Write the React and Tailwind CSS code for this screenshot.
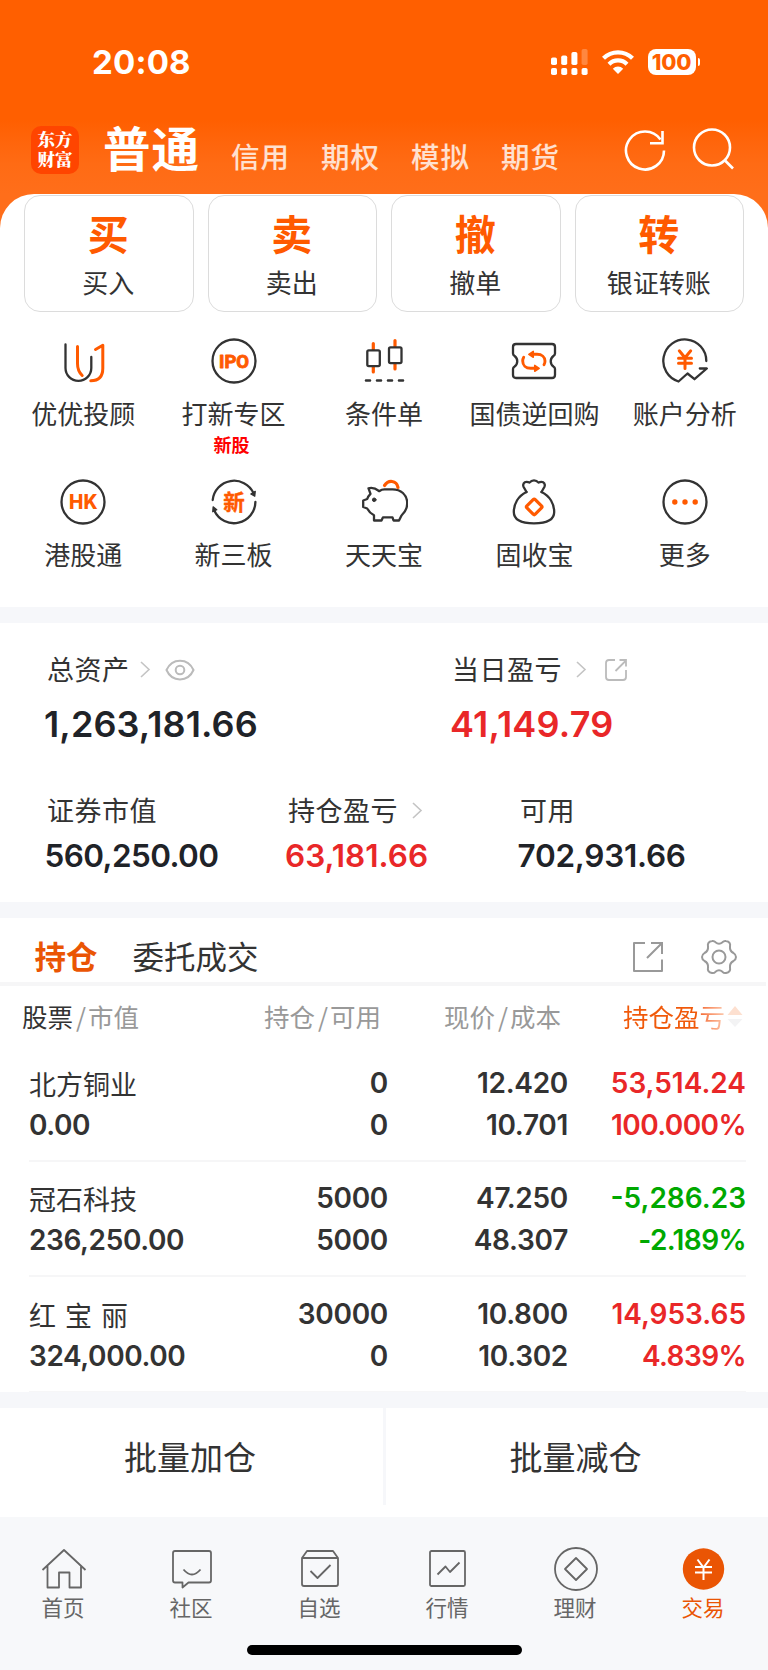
import React from 'react';

const TRADE_TABS = ['信用', '期权', '模拟', '期货'];

const ACTIONS = [
  { mark: '买', label: '买入' },
  { mark: '卖', label: '卖出' },
  { mark: '撤', label: '撤单' },
  { mark: '转', label: '银证转账' },
];

const HOLDINGS = [
  { name: '北方铜业', value: '0.00', held: '0', usable: '0', price: '12.420', cost: '10.701', profit: '53,514.24', rate: '100.000%', up: true },
  { name: '冠石科技', value: '236,250.00', held: '5000', usable: '5000', price: '47.250', cost: '48.307', profit: '-5,286.23', rate: '-2.189%', up: false },
  { name: '红 宝 丽', value: '324,000.00', held: '30000', usable: '0', price: '10.800', cost: '10.302', profit: '14,953.65', rate: '4.839%', up: true },
];

// ── Shortcut icons (48 x 48, dark outline with orange accent) ─────────
function ShortcutIcon({ children }) {
  return (
    <svg className="w-12 h-12" viewBox="0 0 48 48" fill="none" stroke="#333" strokeWidth="2.3" strokeLinecap="round" strokeLinejoin="round">
      {children}
    </svg>
  );
}

const AdvisorIcon = () => (
  <ShortcutIcon>
    <path d="M6.5 7.5v23.500a12.900 12.900 0 0 0 25.800 0V20" />
    <path d="M18.500 9.500v17c0 5 1 8.500 4.700 12" stroke="#ff5a00" strokeWidth="3" />
    <path d="M36.500 12.500l7.300-4.300v23c0 8-4 12.500-12 12.500" stroke="#ff5a00" strokeWidth="3" />
  </ShortcutIcon>
);

const IpoIcon = () => (
  <ShortcutIcon>
    <circle cx="24" cy="24" r="21.5" />
    <text x="24" y="30.800" textAnchor="middle" textLength="30" lengthAdjust="spacingAndGlyphs" fontFamily="Roboto, sans-serif" fontSize="18.500" fontWeight="700" fill="#ff5a00" stroke="#ff5a00" strokeWidth="0.900">IPO</text>
  </ShortcutIcon>
);

const ConditionIcon = () => (
  <ShortcutIcon>
    <path d="M13.300 6.500v6M13.300 30v5M35 3.500v6M35 27v5" stroke="#ff5a00" strokeWidth="3.200" />
    <rect x="7.300" y="13.300" width="12.500" height="15.800" rx="1.500" />
    <rect x="29" y="10.300" width="12.500" height="15.800" rx="1.500" />
    <path d="M6 43.500h4M17 43.500h4M28 43.500h4M39 43.500h4" strokeWidth="2.600" />
  </ShortcutIcon>
);

const BondIcon = () => (
  <ShortcutIcon>
    <path d="M6 7h36q3 0 3 3v6.500q0 1.500-1.600 2.500a6.500 6.500 0 0 0 0 10.500q1.600 1 1.600 2.500V38q0 3-3 3H6q-3 0-3-3v-6q0-1.500 1.600-2.500a6.500 6.500 0 0 0 0-10.500Q3 18 3 16.500V10q0-3 3-3z" />
    <path d="M23 17.300h4c5 0 8 3 8 6.700 0 1.500-.4 2.800-1 3.800M13.700 20.300c-.6 1-1 2.200-1 3.700 0 4 3 7.300 8 7.300h4" stroke="#ff5a00" strokeWidth="2.900" />
    <path d="M23.300 14.300v6l-4.500-3zM24.700 28.300v6l4.500-3z" fill="#ff5a00" stroke="#ff5a00" strokeWidth="1.500" />
  </ShortcutIcon>
);

const AccountIcon = () => (
  <ShortcutIcon>
    <path d="M45.300 24A21.500 21.500 0 1 0 17.500 44.500l9-8 7 5.700L45.800 31.500h-7" />
    <path d="M18.300 13.800l5.700 7 5.700-7M24 21v10.500M17.500 21.300h13M17.500 26.300h13" stroke="#ff5a00" strokeWidth="3" />
  </ShortcutIcon>
);

const HkIcon = () => (
  <ShortcutIcon>
    <circle cx="24" cy="24" r="21.5" />
    <text x="24.300" y="31" textAnchor="middle" textLength="28.500" lengthAdjust="spacingAndGlyphs" fontFamily="Inter, sans-serif" fontSize="20" fontWeight="800" fill="#ff5a00" stroke="none">HK</text>
  </ShortcutIcon>
);

const NewBoardIcon = () => (
  <ShortcutIcon>
    <path d="M2.700 22A21.500 21.500 0 0 1 43.500 15M45.400 24A21.500 21.500 0 0 1 4.500 33" />
    <path d="M40.800 16l4 2.300.5-5zM2.700 33.800l.4-5 3.700 3z" fill="#333" strokeWidth="1.200" />
    <text x="24" y="31.500" textAnchor="middle" fontFamily="'Noto Sans CJK SC', sans-serif" fontSize="21.500" fontWeight="700" fill="#ff5a00" stroke="#ff5a00" strokeWidth="0.400">新</text>
  </ShortcutIcon>
);

const PiggyIcon = () => (
  <ShortcutIcon>
    <path d="M19 13Q13.500 8.800 8.500 10.300l2 5.500q-2.600 2.500-3.300 5.200l-4 1.500v6.500l4 1.500q2.300 4.500 6.800 6.800V42.500h7.500l1.500-3.200h9.500l1 3.200h5.500l2.500-5q5.700-5.300 5.700-12c0-9-6.500-14.200-14.700-14.200h-8q-2.800 0-5 1.700z" />
    <circle cx="14.200" cy="21.800" r="1.800" fill="#333" stroke="#333" strokeWidth="1" />
    <path d="M24.500 7.500q3-4.500 7.500-4 5 .5 6 6" stroke="#ff5a00" strokeWidth="3.200" />
  </ShortcutIcon>
);

const PouchIcon = () => (
  <ShortcutIcon>
    <path d="M16.500 14l-3-5.200c-1-2.500.5-5 3-5q1.800 0 3 .8 1.800-2.300 4.500-2.300t4.500 2.300q1.200-.8 3-.8c2.500 0 4 2.500 3 5L31.500 14" />
    <path d="M16.500 14C8 18 3.800 26 3.800 34c0 8.500 8.700 11.300 20.200 11.300S44.200 42.500 44.200 34c0-8-4.200-16-12.700-20" />
    <rect x="18.300" y="23" width="11.800" height="11.800" rx="1.500" transform="rotate(45 24.200 28.900)" stroke="#ff5a00" strokeWidth="3.200" />
  </ShortcutIcon>
);

const MoreIcon = () => (
  <ShortcutIcon>
    <circle cx="24" cy="24" r="21.5" />
    <g fill="#ff5a00" stroke="none">
      <circle cx="13.800" cy="24" r="2.700" />
      <circle cx="24" cy="24" r="2.700" />
      <circle cx="34.200" cy="24" r="2.700" />
    </g>
  </ShortcutIcon>
);

const SHORTCUTS = [
  { label: '优优投顾', Icon: AdvisorIcon },
  { label: '打新专区', Icon: IpoIcon, tag: '新股' },
  { label: '条件单', Icon: ConditionIcon },
  { label: '国债逆回购', Icon: BondIcon },
  { label: '账户分析', Icon: AccountIcon },
  { label: '港股通', Icon: HkIcon },
  { label: '新三板', Icon: NewBoardIcon },
  { label: '天天宝', Icon: PiggyIcon },
  { label: '固收宝', Icon: PouchIcon },
  { label: '更多', Icon: MoreIcon },
];

// ── Bottom navigation ────────────────────────────────────────────────
const NAV = [
  { label: '首页', art: <path d="M2.500 24L24 4l21.500 20M7.500 20v21.500h11.500V26.500h10.500v15h11.500V20" /> },
  { label: '社区', art: <><path d="M7 5h34q2 0 2 2v27.500q0 2-2 2H20.500l-6 5v-5H7q-2 0-2-2V7q0-2 2-2z" /><path d="M15.500 23.500q8.500 10 17 0" /></> },
  { label: '自选', art: <><path d="M6 12v26q0 2 2 2h32q2 0 2-2V12l-5-7H11zM6 12h36" /><path d="M14.500 25l7 7L34.500 19" /></> },
  { label: '行情', art: <><rect x="6" y="5" width="35" height="35" rx="1.500" /><path d="M13.500 28.500l8-8 4.500 5.500 9.500-9.500" /></> },
  { label: '理财', art: <><circle cx="24" cy="23" r="21" /><path d="M24 12l11 11-11 11-11-11z" /></> },
  { label: '交易', active: true },
];

function Chevron() {
  return (
    <svg className="w-[11px] h-[17px]" viewBox="0 0 11 17" fill="none" stroke="#c4c4c4" strokeWidth="1.600">
      <path d="M1 1l8 7.500L1 16" />
    </svg>
  );
}

function StatusBar() {
  return (
    <div className="h-[120px] pt-[42px] pl-[92px] pr-[68px] flex justify-between items-start">
      <span className="-mt-px font-[Inter,sans-serif] font-bold text-[33px] leading-[42px] tracking-[0.200px]">20:08</span>
      <div className="flex items-center h-[40px]">
        <svg className="w-[38px] h-[27px]" viewBox="0 0 38 27" fill="#fff">
          <rect x="0" y="8.500" width="6" height="7.500" rx="1.800" />
          <rect x="10.200" y="6.500" width="6" height="9.500" rx="1.800" />
          <rect x="20.400" y="3" width="6" height="13" rx="1.800" />
          <rect x="30.600" y="0" width="6" height="16" rx="1.800" opacity="0.250" />
          <rect x="0" y="19" width="6" height="7" rx="1.800" />
          <rect x="10.200" y="19" width="6" height="7" rx="1.800" />
          <rect x="20.400" y="19" width="6" height="7" rx="1.800" />
          <rect x="30.600" y="19" width="6" height="7" rx="1.800" />
        </svg>
        <svg className="w-[32px] h-[24px] ml-[13px]" viewBox="0 0 32 24" fill="none" stroke="#fff" strokeWidth="4.200">
          <path d="M1.500 8.300a20.500 20.500 0 0 1 29 0" />
          <path d="M7 14.200a12.700 12.700 0 0 1 18 0" />
          <path d="M16 24l-5.200-5.200a7.300 7.300 0 0 1 10.400 0z" fill="#fff" stroke="none" />
        </svg>
        <div className="ml-[14px] w-[48px] h-[26px] rounded-[8px] bg-white text-[#ff5f00] font-[Inter,sans-serif] font-extrabold text-[22px] leading-[26px] text-center tracking-[-0.300px]">100</div>
        <div className="ml-[2px] w-[2.500px] h-[8px] rounded-r-full bg-white" />
      </div>
    </div>
  );
}

function TopNav() {
  return (
    <div className="h-[74px] pl-[31px] pr-[34px] flex items-start bg-linear-to-b from-[#ff5f00] from-0% via-[#ff6b14] via-60% to-[#ff6e1a]">
      <div className="mt-[6px] w-[48px] h-[48px] shrink-0 rounded-[10px] bg-[#ff4500] pt-[3px] text-center font-['Noto_Serif_CJK_SC','Noto_Sans_CJK_SC',serif] font-black text-[17.500px] leading-[20px]">
        东方<br />财富
      </div>
      <span className="ml-[24px] w-[106px] shrink-0 font-bold text-[47.500px] leading-[54px] tracking-[1px] whitespace-nowrap">普通</span>
      <div className="ml-[22px] mt-[17px] flex w-[360px] shrink-0 text-[28.500px] leading-[38px] tracking-[1px] text-white/80 font-medium">
        {TRADE_TABS.map((tab) => (
          <span key={tab} className="w-[90px]">{tab}</span>
        ))}
      </div>
      <svg className="w-[44px] h-[44px] mt-[8px] ml-[32px] shrink-0" viewBox="0 0 44 44" fill="none" stroke="#fff" strokeWidth="2.600">
        <path d="M41 22.500A19 19 0 1 1 37.500 11.500" />
        <path d="M39.500 3v12.300H27" />
      </svg>
      <svg className="w-[44px] h-[44px] mt-[7px] ml-[24px] shrink-0" viewBox="0 0 44 44" fill="none" stroke="#fff" strokeWidth="2.600">
        <circle cx="21" cy="20.500" r="18" />
        <path d="M33.500 33l8.500 8.500" />
      </svg>
    </div>
  );
}

function ActionCards() {
  return (
    <div className="grid grid-cols-4 gap-[14px] pl-[24px] pr-6 pt-px">
      {ACTIONS.map(({ mark, label }) => (
        <div key={label} className="h-[117px] rounded-[16px] border-[1.500px] border-[#dcdcdc] flex flex-col items-center">
          <span className="mt-[12px] mr-px text-[41px] leading-[48px] font-bold text-[#ff5a00]">{mark}</span>
          <span className="mt-[9px] mr-px text-[26px] leading-[34px]">{label}</span>
        </div>
      ))}
    </div>
  );
}

function Shortcuts() {
  return (
    <div className="grid grid-cols-5 px-2 pt-[25px] h-[295px] auto-rows-[140.500px]">
      {SHORTCUTS.map(({ label, Icon, tag }) => (
        <div key={label} className="flex flex-col items-center">
          <Icon />
          <span className="mt-[10px] text-[26px] leading-[36px] whitespace-nowrap">{label}</span>
          {tag && <span className="mt-[1px] mr-[4px] text-[18px] leading-[24px] font-bold text-[#ff0000]">{tag}</span>}
        </div>
      ))}
    </div>
  );
}

function Assets() {
  return (
    <div className="h-[279px] pt-[28px]">
      <div className="flex">
        <div className="w-[405px] pl-[47px]">
          <div className="flex items-center h-[36px]">
            <span className="text-[27px] leading-[36px] tracking-[0.500px]">总资产</span>
            <div className="ml-[10px]"><Chevron /></div>
            <svg className="ml-[14px] mt-px w-[30px] h-[22px]" viewBox="0 0 30 22" fill="none" stroke="#bbb" strokeWidth="2">
              <path d="M1.500 11C7 -1.500 23 -1.500 28.500 11C23 23.500 7 23.500 1.500 11z" />
              <circle cx="15" cy="11" r="4.300" />
            </svg>
          </div>
          <div className="-ml-[3px] mt-[17px] font-[Inter,sans-serif] font-semibold text-[36px] leading-[40px] tracking-[0.100px] text-[#1f2328]">1,263,181.66</div>
        </div>
        <div className="pl-[47px]">
          <div className="flex items-center h-[36px]">
            <span className="text-[27px] leading-[36px] tracking-[0.500px]">当日盈亏</span>
            <div className="ml-[14px]"><Chevron /></div>
            <svg className="ml-[17px] mt-[2px] w-[24px] h-[24px]" viewBox="0 0 24 24" fill="none" stroke="#bbb" strokeWidth="1.800">
              <path d="M11 2H5Q2 2 2 5v14q0 3 3 3h14q3 0 3-3v-7" />
              <path d="M11.500 13L22 2.500M15.500 2H22v6.500" />
            </svg>
          </div>
          <div className="-ml-[2px] mt-[17px] font-[Inter,sans-serif] font-semibold text-[36px] leading-[40px] tracking-[0.200px] text-[#e92728]">41,149.79</div>
        </div>
      </div>
      <div className="flex mt-[48px] text-[27px]">
        <div className="w-[241px] pl-[47px]">
          <div className="leading-[36px] tracking-[0.500px]">证券市值</div>
          <div className="-ml-[2.500px] mt-[10px] font-[Inter,sans-serif] font-semibold text-[31.500px] leading-[36px] tracking-[-0.600px] text-[#1f2328]">560,250.00</div>
        </div>
        <div className="w-[232px] pl-[47px]">
          <div className="flex items-center leading-[36px] tracking-[0.500px]">
            持仓盈亏
            <div className="ml-[14px]"><Chevron /></div>
          </div>
          <div className="-ml-[3px] mt-[10px] font-[Inter,sans-serif] font-semibold text-[31.500px] leading-[36px] text-[#e92728]">63,181.66</div>
        </div>
        <div className="pl-[47px]">
          <div className="leading-[36px] tracking-[0.500px]">可用</div>
          <div className="-ml-[2.500px] mt-[10px] font-[Inter,sans-serif] font-semibold text-[31.500px] leading-[36px] tracking-[-0.250px] text-[#1f2328]">702,931.66</div>
        </div>
      </div>
    </div>
  );
}

function HoldingRow({ row }) {
  const tone = row.up ? 'text-[#e92728]' : 'text-[#00a800]';
  return (
    <div className="ml-[29px] mr-[22px] h-[115.700px] pt-[15.500px] border-b-2 border-[#f6f6f7] grid grid-cols-[180px_179px_180px_178px] font-[Inter,sans-serif] font-semibold text-[28px] leading-[42px] tracking-[-0.300px] text-right">
      <div className="text-left">
        <div className="font-['Noto_Sans_CJK_SC',sans-serif] font-normal text-[27px] h-[42px] leading-[44px] tracking-normal [word-spacing:3px] whitespace-pre">{row.name}</div>
        <div className="tracking-[-0.400px]">{row.value}</div>
      </div>
      <div>
        <div>{row.held}</div>
        <div>{row.usable}</div>
      </div>
      <div>
        <div>{row.price}</div>
        <div>{row.cost}</div>
      </div>
      <div className={tone}>
        <div className="tracking-normal">{row.profit}</div>
        <div className="tracking-[-0.600px]">{row.rate}</div>
      </div>
    </div>
  );
}

function Holdings() {
  return (
    <div>
      <div className="h-[64px] pl-[34.500px] pr-[31px] flex items-center text-[31.500px] leading-[44px]">
        <span className="mt-[9px] font-bold text-[#ea5504]">持仓</span>
        <span className="mt-[9px] ml-[35px]">委托成交</span>
        <svg className="ml-auto mt-[13px] w-[32px] h-[32px]" viewBox="0 0 32 32" fill="none" stroke="#999" strokeWidth="2">
          <path d="M13 2H2v28h28V18.500" strokeLinejoin="round" />
          <path d="M15 17L30 2M19 2h11v11" />
        </svg>
        <svg className="ml-[37px] mt-[13px] w-[36px] h-[36px]" viewBox="0 0 36 36" fill="none" stroke="#999" strokeWidth="2">
          <path d="M7 7.500Q6 3 11 2q2-.5 3.500 1.200 3.500 3 7 0Q23 1.500 25 2q5 1 4 5.500-.5 4.500 3.500 6.500 2.500 1.500 2.500 4t-2.500 4Q28.500 24 29 28.500q1 4.500-4 5.500-2 .5-3.500-1.200-3.500-3-7 0Q13 34.500 11 34q-5-1-4-5.500Q7.500 24 3.500 22 1 20.500 1 18t2.500-4Q7.500 12 7 7.500z" />
          <circle cx="18" cy="18" r="6.500" />
        </svg>
      </div>
      <div className="h-[4px] w-[766px] bg-[#f6f6f7]" />
      <div className="h-[60px] pt-[12px] pl-[22px] flex text-[25.500px] leading-[36px] text-[#999] whitespace-nowrap">
        <div className="w-[242px]"><span className="text-[#333]">股票</span><span className="ml-[3px] mr-[2px]">/</span>市值</div>
        <div className="w-[180px]">持仓<span className="ml-[3px] mr-[2px]">/</span>可用</div>
        <div className="w-[179px]">现价<span className="ml-[3px] mr-[2px]">/</span>成本</div>
        <div className="flex items-center h-[36px]">
          <span className="text-transparent bg-clip-text bg-linear-to-r from-[#f0590a] from-72% to-[#fbc9ae]">持仓盈亏</span>
          <svg className="ml-[2px] mt-[2px] w-[16px] h-[22px]" viewBox="0 0 16 22">
            <path d="M8 0l7.500 9H.5z" fill="#fde0d0" />
            <path d="M8 21l7.500-8H.5z" fill="#f3f3f4" />
          </svg>
        </div>
      </div>
      <div className="h-[346px]">
        {HOLDINGS.map((row) => (
          <HoldingRow key={row.name} row={row} />
        ))}
      </div>
    </div>
  );
}

function BottomNav() {
  return (
    <div className="h-[153px] bg-[#f7f8fa] pt-[29px]">
      <div className="grid grid-cols-6">
        {NAV.map(({ label, art, active }) => (
          <div key={label} className={`flex flex-col items-center ${active ? 'text-[#ea5504]' : 'text-[#666]'}`}>
            {active ? (
              <svg className="w-12 h-[46px]" viewBox="0 0 48 46" fill="none" stroke="#fff" strokeWidth="2">
                <circle cx="23.500" cy="23" r="20.700" fill="#ea5504" stroke="none" />
                <path d="M17.500 13.500l6 8 6-8M23.500 21.500v12.500M15 21h17M15 26.500h17" />
              </svg>
            ) : (
              <svg className="w-12 h-[46px]" viewBox="0 0 48 46" fill="none" stroke="#666" strokeWidth="1.800" strokeLinejoin="round">
                {art}
              </svg>
            )}
            <span className="text-[21.500px] leading-[30px] -ml-[2px]">{label}</span>
          </div>
        ))}
      </div>
      <div className="mt-[23px] ml-[246.500px] w-[275px] h-[10px] rounded-full bg-black" />
    </div>
  );
}

function App() {
  return (
    <div className="w-[768px] h-[1670px] overflow-hidden bg-[#ff6e1a] font-['Noto_Sans_CJK_SC',sans-serif] text-[#333]">
      <div className="bg-[#ff5f00] text-white">
        <StatusBar />
        <TopNav />
      </div>
      <div className="bg-white rounded-t-[34px]">
        <ActionCards />
        <Shortcuts />
        <div className="h-[16px] bg-[#f6f7fa]" />
        <Assets />
        <div className="h-[16px] bg-[#f6f7fa]" />
        <Holdings />
        <div className="h-[16px] bg-[#f6f7fa]" />
        <div className="h-[109px] flex items-start text-[33px] leading-[46px] text-center">
          <span className="w-[380px] pt-[25px]">批量加仓</span>
          <span className="ml-[3px] w-[3px] h-[97px] bg-[#f6f7fa]" />
          <span className="w-[379px] pt-[25px]">批量减仓</span>
        </div>
      </div>
      <BottomNav />
    </div>
  );
}

export default App;
